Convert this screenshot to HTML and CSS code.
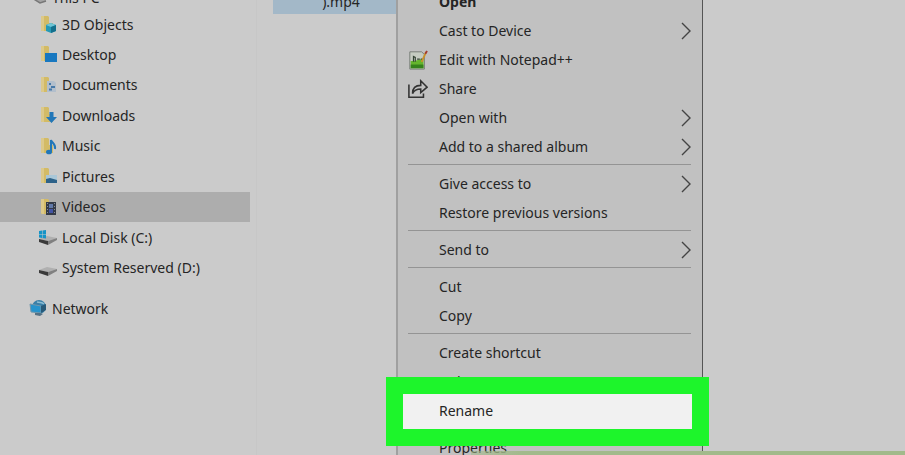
FILE: index.html
```
<!DOCTYPE html>
<html lang="en">
<head>
    <meta charset="utf-8">
    <title>Videos</title>
    <link rel="stylesheet" href="styles.css">
</head>
<body>
    <!-- shared shapes -->
    <svg width="0" height="0" class="defs">
        <symbol id="folder" viewBox="0 0 20 20">
            <path d="M3 2h7l1 1v6h4v8H4l-1-1z" fill="#d3bb66"/>
            <path d="M3 2h3v15H4l-1-1z" fill="#dcc98a"/>
        </symbol>
        <symbol id="drive" viewBox="0 0 20 20">
            <path d="M1 12l8-3 10 2-9 3z" fill="#b0b0b0"/>
            <path d="M1 12l9 2v4l-9-3z" fill="#3a3a3a"/>
            <path d="M10 14l9-3v2l-9 5z" fill="#808080"/>
        </symbol>
        <symbol id="arrow" viewBox="0 0 10 18">
            <path d="M1 1l8 8-8 8" fill="none" stroke="#444" stroke-width="1.4"/>
        </symbol>
    </svg>

    <div class="explorer">
        <nav class="sidebar">
            <a href="#" class="node root">
                <svg class="icon" viewBox="0 0 20 20"><path d="M1 9l11 7 6-2V5L3 3z" fill="#a4a4a4"/><path d="M1 9l11 7 6-2" fill="none" stroke="#777" stroke-width="1.500"/></svg>
                This PC
            </a>
            <ul class="tree">
                <li><a href="#" class="node child">
                    <svg class="icon" viewBox="0 0 20 20"><use href="#folder"/><path d="M8 11l5-2 5 2v6l-5 2-5-2z" fill="#2599b5"/><path d="M8 11l5-2 5 2-5 2z" fill="#70c5d5"/><path d="M13 13l5-2v6l-5 2z" fill="#146f8c"/></svg>
                    3D Objects</a></li>
                <li><a href="#" class="node child">
                    <svg class="icon" viewBox="0 0 20 20"><use href="#folder"/><path d="M7 9h12v9H7z" fill="#1878c0"/></svg>
                    Desktop</a></li>
                <li><a href="#" class="node child">
                    <svg class="icon" viewBox="0 0 20 20"><use href="#folder"/><path d="M9 6h7l2 2v9H9z" fill="#b3bfcc"/><path d="M11 9h2M13 12h4M11 14.500h3" stroke="#4779a8" stroke-width="2"/></svg>
                    Documents</a></li>
                <li><a href="#" class="node child">
                    <svg class="icon" viewBox="0 0 20 20"><use href="#folder"/><path d="M11.500 7h4v5H19l-5.500 6L8 12h3.500z" fill="#2277b8"/></svg>
                    Downloads</a></li>
                <li><a href="#" class="node child">
                    <svg class="icon" viewBox="0 0 20 20"><use href="#folder"/><path d="M13 16V4c1 3 5 4 4 9" fill="none" stroke="#2277b8" stroke-width="2"/><ellipse cx="11" cy="16" rx="3" ry="2.300" fill="#2277b8"/></svg>
                    Music</a></li>
                <li><a href="#" class="node child">
                    <svg class="icon" viewBox="0 0 20 20"><use href="#folder"/><path d="M8 9h11v8H8z" fill="#a9c7d8"/><path d="M8 13l4-1 7 2v3H8z" fill="#2d6289"/></svg>
                    Pictures</a></li>
                <li><a href="#" class="node child selected">
                    <svg class="icon" viewBox="0 0 20 20"><use href="#folder"/><path d="M8 5h10v13H8z" fill="#333a48"/><path d="M11 7h4v4h-4z" fill="#6078a8"/><path d="M11 12h4v4h-4z" fill="#4254a5"/><path d="M9.500 6v11M16.500 6v11" stroke="#8b8e94" stroke-dasharray="1 2"/></svg>
                    Videos</a></li>
                <li><a href="#" class="node child">
                    <svg class="icon" viewBox="0 0 20 20"><use href="#drive"/><path d="M1 4l3-.5V7H1zM4.500 3.500L8 3v4H4.500zM1 7.500h3V11l-3-.5zM4.500 7.500H8v4L4.500 11z" fill="#1594c7"/></svg>
                    Local Disk (C:)</a></li>
                <li><a href="#" class="node child">
                    <svg class="icon" viewBox="0 0 20 20"><use href="#drive"/></svg>
                    System Reserved (D:)</a></li>
            </ul>
            <a href="#" class="node">
                <svg class="icon" viewBox="0 0 20 20"><circle cx="11" cy="9" r="7" fill="#397fa8"/><path d="M9 4c3 1 5 0 7 2" fill="none" stroke="#8cbdd3" stroke-width="1.500"/><path d="M2 6l11 2v7L3 14z" fill="#2693cc" stroke="#7297ab"/><path d="M7 15v2l5 1 3-2-3-1z" fill="#557184"/><path d="M13 8l5-2v6l-5 3z" fill="#285978"/></svg>
                Network
            </a>
        </nav>

        <main class="files">
            <div class="file">).mp4</div>
        </main>
    </div>

    <div class="menu">
        <button class="item default">Open</button>
        <button class="item">Cast to Device <svg class="more"><use href="#arrow"/></svg></button>
        <button class="item">
            <svg class="glyph" viewBox="0 0 22 22"><path d="M2 2h13l3 3v16H2z" fill="#c5ccc1" stroke="#727772"/><path d="M3 12c5 1 9-2 14-2v10H3z" fill="#65b52d"/><path d="M3 16h14v4H3z" fill="#35821b"/><path d="M6 13V7l2 1v5M10 10h3M14 10h2" fill="none" stroke="#354535" stroke-width="1.300"/><path d="M20 2l-5 11" stroke="#c9912a" stroke-width="2"/><path d="M21 1l-2 3" stroke="#a33a30" stroke-width="2"/></svg>
            Edit with Notepad++
        </button>
        <button class="item">
            <svg class="glyph" viewBox="0 0 22 22"><path d="M1 6v14h16v-4" fill="none" stroke="#333" stroke-width="1.700"/><path d="M5 16c0-6 3-9 9-9V2l7 7-7 6v-4c-4 0-7 1-9 5z" fill="none" stroke="#333" stroke-width="1.700"/></svg>
            Share
        </button>
        <button class="item">Open with <svg class="more"><use href="#arrow"/></svg></button>
        <button class="item">Add to a shared album <svg class="more"><use href="#arrow"/></svg></button>
        <hr>
        <button class="item">Give access to <svg class="more"><use href="#arrow"/></svg></button>
        <button class="item">Restore previous versions</button>
        <hr>
        <button class="item">Send to <svg class="more"><use href="#arrow"/></svg></button>
        <hr>
        <button class="item">Cut</button>
        <button class="item">Copy</button>
        <hr>
        <button class="item">Create shortcut</button>
        <button class="item">Delete</button>
        <button class="item marked">Rename</button>
        <hr>
        <button class="item">Properties</button>
    </div>

    <div class="strip"></div>
</body>
</html>
```
FILE: styles.css
```
body {
    margin: 0;
    height: 100vh;
    overflow: hidden;
    position: relative;
    background-color: #cbcbcb;
    color: #252525;
    font-family: "Noto Sans", "Open Sans", sans-serif;
    font-size: 14px;
}
.defs {
    position: absolute;
}
.explorer {
    display: flex;
    height: 100%;
}
/* the tree is scrolled a little, "This PC" is cut at the top */
.sidebar {
    width: 250px;
    flex-shrink: 0;
    margin-top: -15px;
    padding-right: 6px;
    border-right: 1px solid #c7c7c7;
}
.node {
    display: flex;
    align-items: center;
    gap: 4px;
    height: 30px;
    padding-left: 28px;
    color: inherit;
    text-decoration: none;
}
.root {
    height: 24px;
}
.tree {
    display: grid;
    grid-template-rows: repeat(9, 1fr);
    height: 274px;
    margin: 0 0 10px;
    padding: 0;
    list-style: none;
}
.child {
    padding-left: 38px;
}
.selected {
    background-color: #adadad;
}
.icon {
    width: 20px;
    height: 20px;
}
.files {
    flex: 1;
    padding-left: 16px;
}
.file {
    width: 136px;
    height: 14px;
    line-height: 4px;
    text-align: center;
    background-color: #a3b8c8;
}

/* context menu */
.menu {
    position: absolute;
    top: -13px;
    left: 396px;
    width: 307px;
    box-sizing: border-box;
    padding: 0 11px 0 10px;
    background-color: #c1c1c1;
    border-left: 2px solid #a0a0a0;
    border-right: 1px solid #555;
}
.item {
    display: flex;
    align-items: center;
    position: relative;
    width: 100%;
    height: 29px;
    padding: 0 0 0 31px;
    border: none;
    background: none;
    color: inherit;
    font: inherit;
    text-align: left;
}
.default {
    font-weight: bold;
}
.glyph {
    width: 20px;
    height: 20px;
    margin-left: -31px;
    margin-right: 11px;
}
.more {
    width: 10px;
    height: 18px;
    margin-left: auto;
}
.menu hr {
    height: 1px;
    margin: 3px 0 4px;
    border: none;
    background-color: #949494;
}
/* green frame round the marked command */
.marked {
    z-index: 1;
}
.marked::before {
    content: "";
    position: absolute;
    z-index: -1;
    top: -19px;
    bottom: -21px;
    left: -22px;
    right: -18px;
    border: 17px solid #1df52b;
    background-color: #f1f1f1;
    box-sizing: border-box;
}
.strip {
    position: absolute;
    left: 52%;
    right: 0;
    bottom: 0;
    height: 4px;
    background: linear-gradient(to right, rgba(160, 185, 135, 0.5), #a2ba8b 12%);
}
```
